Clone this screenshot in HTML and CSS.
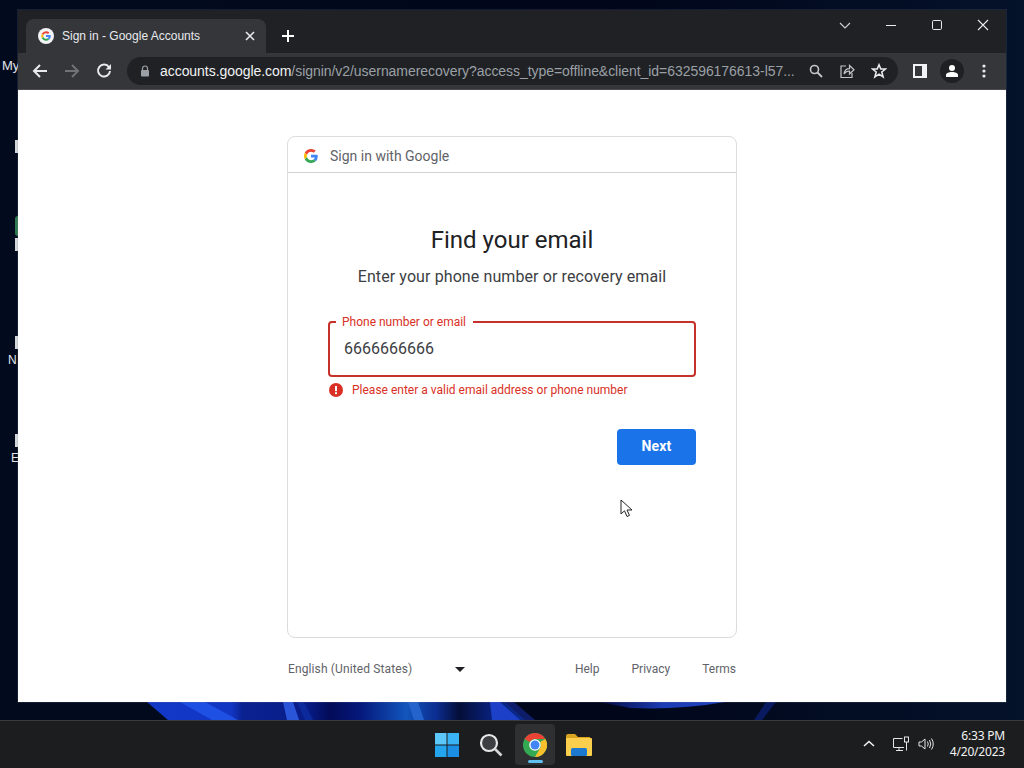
FILE: index.html
```html
<!DOCTYPE html>
<html lang="en">
<head>
<meta charset="utf-8">
<title>Sign in - Google Accounts</title>
<link rel="stylesheet" href="styles.css">
</head>
<body>
<div class="desktop">
  <div class="wallpaper">
    <svg class="swirl" viewBox="0 0 1024 18" width="1024" height="18">
      <defs>
        <linearGradient id="sw" x1="140" x2="520" y1="0" y2="0" gradientUnits="userSpaceOnUse">
          <stop offset="0" stop-color="#1238c8"/>
          <stop offset=".24" stop-color="#1236c4"/>
          <stop offset=".27" stop-color="#0a2290"/>
          <stop offset=".44" stop-color="#081c88"/>
          <stop offset=".5" stop-color="#030b58"/>
          <stop offset=".58" stop-color="#05187c"/>
          <stop offset=".7" stop-color="#1256bc"/>
          <stop offset=".78" stop-color="#0c2c90"/>
          <stop offset=".84" stop-color="#040e38"/>
          <stop offset=".92" stop-color="#082078"/>
          <stop offset="1" stop-color="#0a2a8c"/>
        </linearGradient>
        <linearGradient id="arc" x1="600" x2="725" y1="0" y2="0" gradientUnits="userSpaceOnUse">
          <stop offset="0" stop-color="#050a40"/>
          <stop offset=".5" stop-color="#1c3cb4"/>
          <stop offset="1" stop-color="#2044c0"/>
        </linearGradient>
      </defs>
      <path d="M147 0H512L530 18H168Z" fill="url(#sw)"/>
      <path d="M180 0H205L238 18H212Z" fill="#1f50e4"/>
      <path d="M283 0H293L299 18H287Z" fill="#2a55d8"/>
      <path d="M297 0H304L313 18H305Z" fill="#0c2a9c"/>
      <path d="M408 0H418L424 18H414Z" fill="#2462cc"/>
      <path d="M490 0H500L520 18H492Z" fill="#1c40c8"/>
      <path d="M505 0H514L535 18H525Z" fill="#0e1c6a"/>
      <path d="M600 0H725Q680 8 630 6Z" fill="url(#arc)"/>
      <path d="M766 0H776L762 18H754Z" fill="#0a1a60"/>
    </svg>
  </div>

  <div class="desk-label dl-my">My</div>
  <div class="desk-chip chip-a"></div>
  <div class="desk-chip chip-b"></div>
  <div class="desk-chip chip-c"></div>
  <div class="desk-chip chip-d"></div>
  <div class="desk-green"></div>
  <div class="desk-label dl-n">N</div>
  <div class="desk-label dl-e">E</div>

  <div class="window">
    <div class="tabstrip">
      <div class="tab">
        <svg class="tab-fav" viewBox="0 0 16 16" width="16" height="16">
          <circle cx="8" cy="8" r="8" fill="#f1f3f4"/>
          <path d="M8 3.2A4.8 4.8 0 0 1 11.4 4.6L10 6A2.8 2.8 0 0 0 5.4 7L3.8 5.7A4.8 4.8 0 0 1 8 3.2Z" fill="#ea4335"/>
          <path d="M3.8 5.7L5.4 7A2.8 2.8 0 0 0 5.4 9L3.8 10.3A4.8 4.8 0 0 1 3.8 5.7Z" fill="#fbbc05"/>
          <path d="M3.8 10.3L5.4 9A2.8 2.8 0 0 0 9.7 10.2L11.2 11.5A4.8 4.8 0 0 1 3.8 10.3Z" fill="#34a853"/>
          <path d="M12.8 8A4.8 4.8 0 0 1 11.2 11.5L9.7 10.2A2.8 2.8 0 0 0 10.6 9H8V7.1H12.7Q12.8 7.5 12.8 8Z" fill="#4285f4"/>
        </svg>
        <span class="tab-title">Sign in - Google Accounts</span>
        <svg class="tab-close" viewBox="0 0 10 10" width="10" height="10"><path d="M1 1L9 9M9 1L1 9" stroke="#e8eaed" stroke-width="1.6" fill="none"/></svg>
      </div>
      <svg class="newtab" viewBox="0 0 12 12" width="12" height="12"><path d="M6 0V12M0 6H12" stroke="#fff" stroke-width="2" fill="none"/></svg>
      <div class="caption">
        <svg class="cap-chev" viewBox="0 0 12 7" width="12" height="7"><path d="M1 1L6 6L11 1" stroke="#d0d2d5" stroke-width="1.1" fill="none"/></svg>
        <svg class="cap-btn" viewBox="0 0 46 12" width="46" height="12"><path d="M18 6.5H28" stroke="#e8eaed" stroke-width="1"/></svg>
        <svg class="cap-btn" viewBox="0 0 46 12" width="46" height="12"><rect x="18.5" y="1.5" width="9" height="9" rx="1.2" stroke="#e8eaed" fill="none"/></svg>
        <svg class="cap-btn" viewBox="0 0 46 12" width="46" height="12"><path d="M18 1L28 11M28 1L18 11" stroke="#e8eaed" stroke-width="1.1" fill="none"/></svg>
      </div>
    </div>
    <div class="toolbar">
      <svg class="nav" viewBox="0 0 16 16" width="16" height="16"><path d="M15 8H2M8 2L2 8L8 14" stroke="#e8eaed" stroke-width="2" fill="none"/></svg>
      <svg class="nav" viewBox="0 0 16 16" width="16" height="16"><path d="M1 8H14M8 2L14 8L8 14" stroke="#6f7276" stroke-width="2" fill="none"/></svg>
      <svg class="nav" viewBox="0 0 16 16" width="16" height="16"><path d="M13 4.2A6 6 0 1 0 14 8" stroke="#e8eaed" stroke-width="2" fill="none"/><path d="M15 1V6.5H9.5Z" fill="#e8eaed"/></svg>
      <div class="omnibox">
        <svg class="lock" viewBox="0 0 10 12" width="10" height="12"><path d="M2.5 5V3.5a2.5 2.5 0 0 1 5 0V5" stroke="#9aa0a6" stroke-width="1.2" fill="none"/><rect x="1" y="5" width="8" height="6.5" rx=".8" fill="#9aa0a6"/></svg>
        <div class="url"><span class="url-host">accounts.google.com</span><span class="url-path">/signin/v2/usernamerecovery?access_type=offline&amp;client_id=632596176613-l57...</span></div>
        <div class="omni-icons">
          <svg viewBox="0 0 14 14" width="14" height="14"><circle cx="5.5" cy="5.5" r="4" stroke="#c4c7c9" stroke-width="1.6" fill="none"/><path d="M8.5 8.5L13 13" stroke="#c4c7c9" stroke-width="1.8"/></svg>
          <svg viewBox="0 0 16 16" width="16" height="16"><path d="M7 3H2V14.5H13V10" stroke="#c4c7c9" stroke-width="1.2" fill="none"/><path d="M5 11C5.5 7.5 8 5.7 10.5 5.7V2.5L15 6.8L10.5 11V8C8.5 8 6.5 9 5 11Z" stroke="#c4c7c9" stroke-width="1.2" fill="none"/></svg>
          <svg viewBox="0 0 16 16" width="16" height="16"><path d="M8 1.8L9.8 6H14.5L10.8 9L12.1 13.8L8 11.1L3.9 13.8L5.2 9L1.5 6H6.2Z" stroke="#e8eaed" stroke-width="1.6" fill="none"/></svg>
        </div>
      </div>
      <div class="tool-right">
        <svg viewBox="0 0 14 14" width="14" height="14"><path fill-rule="evenodd" d="M0 0H14V14H0ZM2 2V12H9V2Z" fill="#f1f3f4"/></svg>
        <div class="avatar"><svg viewBox="0 0 14 14" width="14" height="14"><circle cx="7" cy="4" r="3" fill="#fff"/><path d="M1 13V11C1 9 4 8 7 8S13 9 13 11V13Z" fill="#fff"/></svg></div>
        <svg class="kebab" viewBox="0 0 4 14" width="4" height="14"><circle cx="2" cy="2" r="1.6" fill="#e8eaed"/><circle cx="2" cy="7" r="1.6" fill="#e8eaed"/><circle cx="2" cy="12" r="1.6" fill="#e8eaed"/></svg>
      </div>
    </div>
    <main class="page">
      <section class="card">
        <header class="card-head">
          <svg viewBox="0 0 48 48" width="14" height="14"><path fill="#ea4335" d="M24 9.5c3.5 0 6.700 1.300 9.200 3.500l6.900-6.900C35.900 2.400 30.400 0 24 0 14.600 0 6.500 5.400 2.600 13.200l8 6.200C12.500 13.600 17.800 9.500 24 9.500z"/><path fill="#4285f4" d="M47 24.500c0-1.600-.1-3.100-.4-4.500H24v9h12.900c-.6 3-2.200 5.500-4.700 7.200l7.700 6c4.500-4.200 7.100-10.300 7.100-17.700z"/><path fill="#fbbc05" d="M10.500 28.600c-.5-1.500-.8-3-.8-4.600s.3-3.100.8-4.600l-8-6.200C.9 16.400 0 20.100 0 24s.9 7.600 2.600 10.800l7.900-6.200z"/><path fill="#34a853" d="M24 48c6.500 0 11.900-2.100 15.900-5.800l-7.700-6c-2.100 1.400-4.900 2.300-8.200 2.300-6.200 0-11.500-4.200-13.400-9.900l-8 6.200C6.500 42.600 14.600 48 24 48z"/></svg>
          <span class="head-text">Sign in with Google</span>
        </header>
        <div class="card-body">
          <h1 class="title">Find your email</h1>
          <p class="subtitle">Enter your phone number or recovery email</p>
          <div class="field">
            <span class="field-label">Phone number or email</span>
            <span class="field-value">6666666666</span>
          </div>
          <div class="error">
            <svg viewBox="0 0 14 14" width="14" height="14"><circle cx="7" cy="7" r="7" fill="#d93025"/><rect x="6" y="3" width="2" height="5.200" fill="#fff"/><rect x="6" y="9.200" width="2" height="2" fill="#fff"/></svg>
            <span>Please enter a valid email address or phone number</span>
          </div>
          <div class="actions"><button class="next" type="button">Next</button></div>
        </div>
      </section>
      <footer class="page-foot">
        <div class="lang"><span>English (United States)</span><i class="caret"></i></div>
        <nav class="links"><span>Help</span><span>Privacy</span><span>Terms</span></nav>
      </footer>
      <svg class="cursor" viewBox="0 0 13 19" width="13" height="19"><path d="M1 1V15L4.500 11.800L7 17.500L9.500 16.400L7 11H12Z" fill="#fff" stroke="#222" stroke-width="1"/></svg>
    </main>
  </div>

  <div class="taskbar">
    <div class="task-center">
      <div class="task-item">
        <svg viewBox="0 0 24 24" width="24" height="24"><rect width="11.500" height="11.500" fill="#5cc8fa"/><rect x="12.500" width="11.500" height="11.500" fill="#3ab4f5"/><rect y="12.500" width="11.500" height="11.500" fill="#23a6ee"/><rect x="12.500" y="12.500" width="11.500" height="11.500" fill="#1a8fe3"/></svg>
      </div>
      <div class="task-item">
        <svg viewBox="0 0 24 24" width="24" height="24"><circle cx="10" cy="10" r="8" fill="#3d3f42" stroke="#e8e8e8" stroke-width="2.200"/><path d="M16 16L22.500 22.500" stroke="#d5d5d5" stroke-width="2.600"/></svg>
      </div>
      <div class="task-item active">
        <svg viewBox="0 0 24 24" width="24" height="24">
          <circle cx="12" cy="12" r="12" fill="#34a853"/>
          <path d="M12 0A12 12 0 0 1 22.400 6H12A6 6 0 0 0 6.800 9L1.600 6A12 12 0 0 1 12 0Z" fill="#ea4335"/>
          <path d="M22.400 6A12 12 0 0 1 12 24L17.200 15A6 6 0 0 0 17.200 9L22.400 6Z" fill="#fbc02d"/>
          <circle cx="12" cy="12" r="5.800" fill="#fff"/><circle cx="12" cy="12" r="4.500" fill="#4285f4"/>
        </svg>
        <i class="running"></i>
      </div>
      <div class="task-item">
        <svg viewBox="0 0 26 22" width="26" height="22"><path d="M0 2Q0 0 2 0H9L12 3H24V6H0Z" fill="#d9a520"/><rect y="4" width="26" height="18" rx="1" fill="#fbcf4d"/><rect x="5" y="14" width="16" height="8" rx="1.500" fill="#1d78d0"/></svg>
      </div>
    </div>
    <div class="tray">
      <svg viewBox="0 0 12 7" width="12" height="7"><path d="M1 6L6 1.500L11 6" stroke="#f1f1f1" stroke-width="1.600" fill="none"/></svg>
      <svg class="tray-net" viewBox="0 0 16 16" width="16" height="16"><path d="M9.500 2.500H.5V11.500H11M6 11.500V14M3 14.500H10" stroke="#e6e6e6" fill="none"/><rect x="11.500" y="1" width="4" height="5" stroke="#e6e6e6" fill="none"/><path d="M13.500 6V14.500" stroke="#e6e6e6"/></svg>
      <svg class="tray-vol" viewBox="0 0 18 14" width="18" height="14"><path d="M1 5V9H3.500L7 12V2L3.500 5Z" stroke="#e6e6e6" fill="none"/><path d="M9.500 4.500Q11 7 9.500 9.500M11.500 3Q14 7 11.500 11M13.500 1.500Q17 7 13.500 12.500" stroke="#e6e6e6" fill="none"/></svg>
      <div class="clock"><span>6:33 PM</span><span>4/20/2023</span></div>
    </div>
  </div>
</div>
</body>
</html>
```
FILE: styles.css
```css
* { box-sizing: border-box; }
html, body { margin: 0; padding: 0; }
body { font-family: Roboto, "Liberation Sans", sans-serif; }
.desktop {
  position: relative;
  width: 1024px;
  height: 768px;
  overflow: hidden;
  background: linear-gradient(90deg, #020b1e 0%, #01061a 60%, #04122a 100%);
  display: flex;
  flex-direction: column;
}
.wallpaper { height: 720px; position: relative; flex: none; }
.swirl { position: absolute; left: 0; top: 702px; display: block; }

.desk-label { position: absolute; color: #e3e6ea; font: 12px "Liberation Sans", sans-serif; line-height: 14px; }
.dl-my { left: 2px; top: 59px; font-size: 13px; }
.dl-n { left: 8px; top: 353px; }
.dl-e { left: 11px; top: 451px; }
.desk-chip { position: absolute; left: 15px; width: 3px; height: 13px; background: #d5d7da; }
.chip-a { top: 140px; }
.chip-b { top: 238px; }
.chip-c { top: 336px; }
.chip-d { top: 434px; }
.desk-green { position: absolute; left: 15px; top: 216px; width: 3px; height: 20px; background: #2f7a50; border-radius: 3px 0 0 3px; }

.window {
  position: absolute;
  left: 18px;
  top: 10px;
  width: 988px;
  height: 692px;
  display: flex;
  flex-direction: column;
  background: #202124;
  box-shadow: 0 0 0 1px rgba(120,125,140,.18);
}
.tabstrip { height: 43px; flex: none; display: flex; align-items: flex-end; background: #202124; padding-left: 8px; }
.tab {
  width: 240px;
  height: 34px;
  background: #35363a;
  border-radius: 8px 8px 0 0;
  display: flex;
  align-items: center;
  padding: 0 0 0 12px;
}
.tab-fav { flex: none; }
.tab-title { margin-left: 8px; color: #e8eaed; font: 12px "Liberation Sans", Roboto, sans-serif; width: 179px; white-space: nowrap; }
.tab-close { margin-left: 4px; flex: none; }
.newtab { margin: 0 0 11px 16px; flex: none; }
.caption { margin-left: auto; align-self: flex-start; padding-top: 9px; display: flex; align-items: center; gap: 0; }
.cap-chev { margin-right: 17px; }
.cap-btn { display: block; }

.toolbar { height: 37px; flex: none; background: #35363a; display: flex; align-items: center; padding-left: 14px; border-bottom: 1px solid #4a4b4f; }
.nav { flex: none; margin-right: 16px; }
.omnibox {
  width: 771px;
  height: 28px;
  margin-left: -1px;
  background: #202124;
  border-radius: 14px;
  display: flex;
  align-items: center;
  padding-left: 13px;
  flex: none;
}
.lock { flex: none; }
.url { margin-left: 10px; width: 640px; flex: none; white-space: nowrap; overflow: hidden; font: 14px/18px "Liberation Sans", sans-serif; letter-spacing: -.05px; }
.url-host { color: #f1f3f4; }
.url-path { color: #9aa0a6; }
.omni-icons { display: flex; align-items: center; gap: 16px; margin-left: 9px; }
.tool-right { display: flex; align-items: center; margin-left: 15px; }
.avatar { width: 24px; height: 24px; margin-left: 13px; border-radius: 50%; background: #1f2023; display: flex; align-items: center; justify-content: center; }
.kebab { margin-left: 18px; }

.page {
  position: relative;
  flex: 1;
  background: #fff;
  padding-top: 46px;
  display: flex;
  flex-direction: column;
  align-items: center;
}
.card { width: 450px; height: 502px; flex: none; border: 1px solid #dadce0; border-radius: 8px; }
.card-head { height: 36px; border-bottom: 1px solid #d0d2d5; display: flex; align-items: center; padding: 2px 0 0 16px; }
.head-text { margin-left: 12px; color: #5f6368; font-size: 14px; }
.card-body { padding: 49px 40px 0; display: flex; flex-direction: column; }
.title { margin: 0; text-align: center; font-size: 24px; line-height: 36px; font-weight: 400; color: #202124; }
.subtitle { margin: 7px 0 0; text-align: center; font-size: 16px; line-height: 24px; color: #3c4043; letter-spacing: .1px; }
.field {
  position: relative;
  margin-top: 32px;
  height: 56px;
  border: 2px solid #c5322a;
  border-radius: 4px;
  display: flex;
  align-items: center;
  padding: 0 0 1px 14px;
}
.field-label {
  position: absolute;
  left: 6px;
  top: -9px;
  padding: 0 7px 0 6px;
  background: #fff;
  color: #d93025;
  font-size: 12px;
  line-height: 16px;
}
.field-value { font-size: 16px; color: #3c4043; }
.error { margin-top: 5px; display: flex; align-items: center; height: 16px; padding-left: 1px; color: #d93025; font-size: 12px; }
.error span { margin-left: 9px; }
.actions { display: flex; justify-content: flex-end; margin-top: 31px; }
.next {
  width: 79px;
  height: 36px;
  border: 0;
  border-radius: 4px;
  background: #1a73e8;
  color: #fff;
  font: 700 14px Roboto, sans-serif;
  letter-spacing: .2px;
  padding: 0 0 2px;
}
.page-foot { width: 450px; margin-top: 23px; display: flex; justify-content: space-between; align-items: center; font-size: 12px; color: #5f6368; line-height: 16px; padding-right: 1px; padding-left: 1px; }
.lang { display: flex; align-items: center; width: 177px; justify-content: space-between; color: #5f6368; letter-spacing: .12px; }
.caret { width: 0; height: 0; border: 5px solid transparent; border-top-color: #202124; border-bottom: 0; }
.links { display: flex; gap: 32px; }
.cursor { position: absolute; left: 602px; top: 409px; }

.taskbar {
  height: 48px;
  flex: none;
  background: #1c1d1f;
  border-top: 1px solid #3a3b3d;
  position: relative;
  display: flex;
  justify-content: center;
  align-items: center;
}
.task-center { display: flex; align-items: center; margin-left: 2px; }
.task-item { width: 44px; height: 41px; display: flex; align-items: center; justify-content: center; position: relative; }
.task-item.active { background: #2f3032; border-radius: 4px; width: 40px; margin: 0 2px; }
.running { position: absolute; left: 13px; bottom: 2px; width: 15px; height: 3px; border-radius: 2px; background: #60c0f0; }
.tray { position: absolute; right: 19px; top: 0; height: 45px; display: flex; align-items: center; color: #f3f3f3; }
.tray-net { margin-left: 18px; }
.tray-vol { margin-left: 9px; }
.clock { margin-left: 14px; display: flex; flex-direction: column; align-items: flex-end; font: 12px/16px "Noto Sans", "Liberation Sans", sans-serif; letter-spacing: -.2px; }
```
